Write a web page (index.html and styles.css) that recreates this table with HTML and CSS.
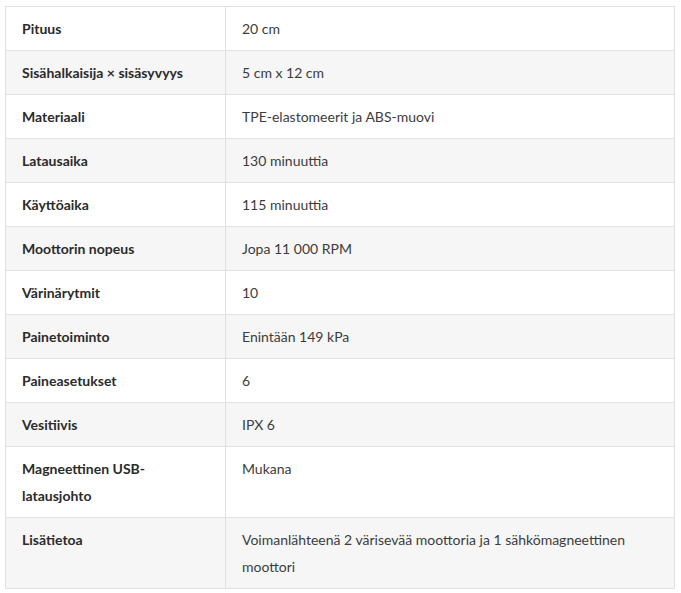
FILE: index.html
```html
<!DOCTYPE html>
<html lang="fi">
<head>
<meta charset="utf-8">
<title>Tekniset tiedot</title>
<link rel="stylesheet" href="styles.css">
</head>
<body>
<table class="specs">
<tbody>
<tr><th>Pituus</th><td>20 cm</td></tr>
<tr><th>Sisähalkaisija × sisäsyvyys</th><td>5 cm x 12 cm</td></tr>
<tr><th>Materiaali</th><td>TPE-elastomeerit ja ABS-muovi</td></tr>
<tr><th>Latausaika</th><td>130 minuuttia</td></tr>
<tr><th>Käyttöaika</th><td>115 minuuttia</td></tr>
<tr><th>Moottorin nopeus</th><td>Jopa 11 000 RPM</td></tr>
<tr><th>Värinärytmit</th><td>10</td></tr>
<tr><th>Painetoiminto</th><td>Enintään 149 kPa</td></tr>
<tr><th>Paineasetukset</th><td>6</td></tr>
<tr><th>Vesitiivis</th><td>IPX 6</td></tr>
<tr><th>Magneettinen USB-latausjohto</th><td>Mukana</td></tr>
<tr><th>Lisätietoa</th><td>Voimanlähteenä 2 värisevää moottoria ja 1 sähkömagneettinen moottori</td></tr>
</tbody>
</table>
</body>
</html>
```
FILE: styles.css
```css
html, body {
  margin: 0;
  padding: 0;
  background: #ffffff;
}
body {
  padding: 6px 5px 5px 5px;
  font-family: Lato, "Open Sans", sans-serif;
  font-size: 14px;
  color: #333333;
}
.specs {
  width: 670px;
  border-collapse: collapse;
  border: 1px solid #e1e1e1;
}
.specs th,
.specs td {
  text-align: left;
  vertical-align: top;
  padding: 8px 16px;
  line-height: 27px;
  border: 1px solid #e1e1e1;
}
.specs th {
  width: 187px;
  font-weight: 700;
  color: #2b2b2b;
}
.specs td {
  font-weight: 400;
  color: #3c3c3c;
}
.specs tr:nth-child(even) {
  background: #f6f6f6;
}
```
